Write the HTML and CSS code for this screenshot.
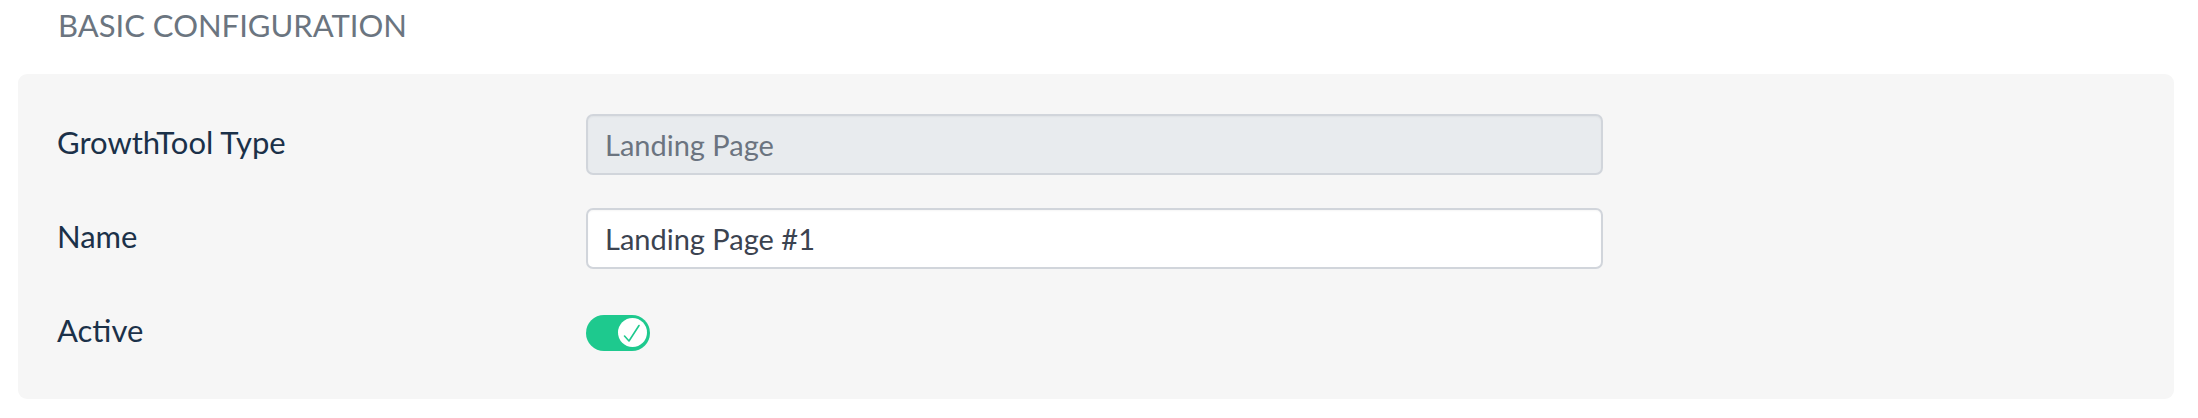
FILE: index.html
```html
<!DOCTYPE html>
<html lang="en">
<head>
<meta charset="utf-8">
<title>Basic Configuration</title>
<link rel="stylesheet" href="styles.css">
</head>
<body>
<div class="page">
  <h2 class="section-title">BASIC CONFIGURATION</h2>
  <div class="panel">
    <div class="row">
      <div class="label">GrowthTool Type</div>
      <input class="field field-disabled" type="text" value="Landing Page" disabled>
    </div>
    <div class="row">
      <div class="label">Name</div>
      <input class="field" type="text" value="Landing Page #1">
    </div>
    <div class="row">
      <div class="label">Active</div>
      <div class="toggle">
        <div class="knob">
          <svg class="check" width="29" height="29" viewBox="0 0 29 29">
            <path d="M6.5 18 L11 23 L21 7.5" fill="none" stroke="#1ec98e" stroke-width="1.6" stroke-linecap="round" stroke-linejoin="round"/>
          </svg>
        </div>
      </div>
    </div>
  </div>
</div>
</body>
</html>
```

FILE: styles.css
```css
* {
  box-sizing: border-box;
}

html, body {
  margin: 0;
  padding: 0;
  background: #ffffff;
}

body {
  font-family: "Lato", "Liberation Sans", sans-serif;
}

.page {
  padding: 8px 24px 0 18px;
}

.section-title {
  margin: 0 0 31px 0;
  padding-left: 40px;
  font-size: 31px;
  line-height: 35px;
  font-weight: 400;
  color: #6b7580;
}

.panel {
  background: #f6f6f6;
  border-radius: 9px;
  padding: 40px 39px 36px 39px;
  display: flex;
  flex-direction: column;
  gap: 33px;
}

.row {
  display: flex;
  align-items: center;
  height: 61px;
}

.label {
  flex: 0 0 529px;
  font-size: 31px;
  line-height: 36px;
  padding-bottom: 5px;
  color: #1b3149;
}

.field {
  width: 1017px;
  height: 61px;
  padding: 0 17px;
  border: 2px solid #d1d5db;
  border-radius: 7px;
  background: #ffffff;
  box-shadow: inset 0 1px 2px rgba(0, 0, 0, 0.04);
  font-family: "Lato", "Liberation Sans", sans-serif;
  font-size: 29px;
  color: #3b4350;
  outline: none;
}

.field-disabled {
  background: #e8ebee;
  color: #6b7480;
}

.toggle {
  width: 64px;
  height: 36px;
  border-radius: 18px;
  background: #1ec98e;
  display: flex;
  align-items: center;
  justify-content: flex-end;
  padding: 0 3px;
}

.knob {
  width: 29px;
  height: 29px;
  border-radius: 50%;
  background: #ffffff;
}

.check {
  display: block;
}
```
